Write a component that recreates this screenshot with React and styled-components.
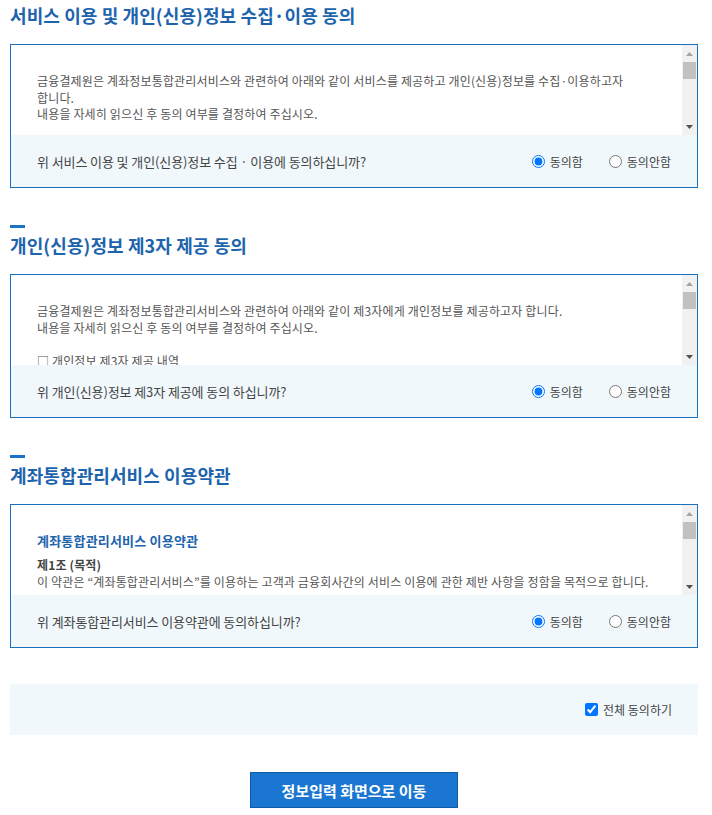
import { useState } from "react";
import styled, { createGlobalStyle } from "styled-components";

const GlobalStyle = createGlobalStyle`
  body {
    margin: 0;
    background: #fff;
    font-family: "Noto Sans CJK KR", "Noto Sans", sans-serif;
    color: #555;
  }
`

const sections = [
  {
    id: 'collect',
    title: '서비스 이용 및 개인(신용)정보 수집·이용 동의',
    question: '위 서비스 이용 및 개인(신용)정보 수집 · 이용에 동의하십니까?',
    body: () => (
      <>
        <p>금융결제원은 계좌정보통합관리서비스와 관련하여 아래와 같이 서비스를 제공하고 개인(신용)정보를 수집·이용하고자 합니다.<br />내용을 자세히 읽으신 후 동의 여부를 결정하여 주십시오.</p>
        <p>□ 수집·이용 목적<br />- 계좌정보통합관리서비스 제공 및 본인확인<br />- 서비스 이용 관련 민원 처리</p>
        <p>□ 수집·이용 항목<br />- 성명, 생년월일, 휴대폰번호, 통신사<br />- 계좌번호, 금융회사명, 계좌잔액</p>
        <p>□ 보유 및 이용 기간<br />- 서비스 이용 종료 시까지</p>
      </>
    ),
  },
  {
    id: 'thirdparty',
    title: '개인(신용)정보 제3자 제공 동의',
    question: '위 개인(신용)정보 제3자 제공에 동의 하십니까?',
    body: () => (
      <>
        <p>금융결제원은 계좌정보통합관리서비스와 관련하여 아래와 같이 제3자에게 개인정보를 제공하고자 합니다.<br />내용을 자세히 읽으신 후 동의 여부를 결정하여 주십시오.</p>
        <p>□ 개인정보 제3자 제공 내역<br />- 제공받는 자: 계좌를 개설한 금융회사<br />- 제공 목적: 계좌정보 조회 및 해지·잔고이전<br />- 제공 항목: 성명, 생년월일, 휴대폰번호</p>
        <p>□ 보유 및 이용 기간<br />- 제공 목적 달성 시까지</p>
        <p>※ 동의를 거부할 수 있으나, 거부 시 서비스 이용이 제한됩니다.</p>
      </>
    ),
  },
  {
    id: 'terms',
    title: '계좌통합관리서비스 이용약관',
    question: '위 계좌통합관리서비스 이용약관에 동의하십니까?',
    body: () => (
      <>
        <TermsTitle>계좌통합관리서비스 이용약관</TermsTitle>
        <Article>제1조 (목적)</Article>
        <p>이 약관은 “계좌통합관리서비스”를 이용하는 고객과 금융회사간의 서비스 이용에 관한 제반 사항을 정함을 목적으로 합니다.</p>
        <Article>제2조 (용어의 정의)</Article>
        <p>① “계좌통합관리서비스”란 고객이 본인 명의의 계좌를 한 번에 조회하고 관리할 수 있는 서비스를 말합니다.<br />② “금융회사”란 서비스에 참가한 은행 등을 말합니다.</p>
        <Article>제3조 (약관의 명시)</Article>
        <p>금융회사는 이 약관을 서비스 화면에 게시합니다.</p>
      </>
    ),
  },
]

// small triangle for the scrollbar buttons
const Arrow = ({ up, color }) => (
  <svg width="7" height="4" viewBox="0 0 7 4">
    <polygon points={up ? '0,4 3.5,0 7,4' : '0,0 7,0 3.5,4'} fill={color} />
  </svg>
)

const ScrollBar = () => (
  <Bar>
    <BarButton><Arrow up color="#a3a3a3" /></BarButton>
    <Track><Thumb /></Track>
    <BarButton><Arrow color="#505050" /></BarButton>
  </Bar>
)

const Section = ({ section, marker, value, onChange }) => (
  <StyledSection>
    {marker && <Marker />}
    <Heading>{section.title}</Heading>
    <AgreeBox>
      <ScrollPane>
        <ScrollContent>{section.body()}</ScrollContent>
        <ScrollBar />
      </ScrollPane>
      <QuestionRow>
        <Question>{section.question}</Question>
        <Choices>
          <Choice>
            <input
              type="radio"
              name={section.id}
              checked={value === 'yes'}
              onChange={() => onChange('yes')}
            />
            동의함
          </Choice>
          <Choice>
            <input
              type="radio"
              name={section.id}
              checked={value === 'no'}
              onChange={() => onChange('no')}
            />
            동의안함
          </Choice>
        </Choices>
      </QuestionRow>
    </AgreeBox>
  </StyledSection>
)

const App = () => {
  const [answers, setAnswers] = useState({ collect: 'yes', thirdparty: 'yes', terms: 'yes' })
  const allAgreed = Object.values(answers).every(v => v === 'yes')

  const toggleAll = () => {
    const next = allAgreed ? 'no' : 'yes'
    setAnswers({ collect: next, thirdparty: next, terms: next })
  }

  return (
    <>
      <GlobalStyle />
      <Page>
        {sections.map((section, i) => (
          <Section
            key={section.id}
            section={section}
            marker={i > 0}
            value={answers[section.id]}
            onChange={v => setAnswers({ ...answers, [section.id]: v })}
          />
        ))}
        <AllAgree>
          <Choice>
            <input type="checkbox" checked={allAgreed} onChange={toggleAll} />
            전체 동의하기
          </Choice>
        </AllAgree>
        <ButtonRow>
          <NextButton type="button">정보입력 화면으로 이동</NextButton>
        </ButtonRow>
      </Page>
    </>
  );
}

const Page = styled.div`
  width: 688px;
  margin-left: 10px;
  padding-top: 2px;
`

const StyledSection = styled.section`
  & + & {
    margin-top: 37px;
  }
`

const Marker = styled.div`
  width: 15px;
  height: 3px;
  background: #1a73c8;
  margin-bottom: 4px;
`

const Heading = styled.h2`
  margin: 0 0 16px;
  font-size: 18px;
  line-height: 26px;
  font-weight: 600;
  letter-spacing: 0.1px;
  color: #1d64ad;
`

const AgreeBox = styled.div`
  border: 1px solid #1b6fbf;
  display: flex;
  flex-direction: column;
`

const ScrollPane = styled.div`
  display: flex;
  height: 90px;
  background: #fff;
`

const ScrollContent = styled.div`
  flex: 1;
  min-width: 0;
  overflow-y: auto;
  scrollbar-width: none;
  padding: 28px 26px 20px;
  font-size: 12px;
  line-height: 16.5px;
  letter-spacing: 0.15px;
  word-break: keep-all;
  color: #555;
  p {
    margin: 0 0 16.5px;
  }
`

const Bar = styled.div`
  width: 15px;
  display: flex;
  flex-direction: column;
  background: #f1f1f1;
`

const BarButton = styled.div`
  height: 17px;
  display: flex;
  align-items: center;
  justify-content: center;
`

const Track = styled.div`
  flex: 1;
  padding: 0 1px;
`

const Thumb = styled.div`
  height: 17px;
  background: #c1c1c1;
`

const TermsTitle = styled.h3`
  margin: 0 0 8px;
  font-size: 13px;
  line-height: 16px;
  font-weight: 600;
  letter-spacing: 0.2px;
  color: #1d64ad;
`

const Article = styled.h4`
  margin: 0;
  font-size: 12px;
  line-height: 16.5px;
  font-weight: 600;
  color: #444;
`

const QuestionRow = styled.div`
  height: 52px;
  padding: 0 26px;
  display: flex;
  align-items: center;
  justify-content: space-between;
  background: #f1f8fc;
`

const Question = styled.span`
  font-size: 13px;
  letter-spacing: -0.1px;
  color: #444;
`

const Choices = styled.div`
  display: flex;
  gap: 26px;
`

const Choice = styled.label`
  display: flex;
  align-items: center;
  font-size: 12px;
  color: #444;
  input {
    margin: 0 5px 0 0;
    width: 13px;
    height: 13px;
  }
`

const AllAgree = styled.div`
  margin-top: 36px;
  height: 51px;
  padding: 0 26px;
  display: flex;
  align-items: center;
  justify-content: flex-end;
  background: #f1f8fc;
`

const ButtonRow = styled.div`
  margin-top: 37px;
  display: flex;
  justify-content: center;
`

const NextButton = styled.button`
  width: 208px;
  height: 36px;
  border: 1px solid #0f5ba6;
  background: #1a76d0;
  color: #fff;
  font-family: inherit;
  font-size: 15px;
  font-weight: 700;
  cursor: pointer;
`

export default App;
